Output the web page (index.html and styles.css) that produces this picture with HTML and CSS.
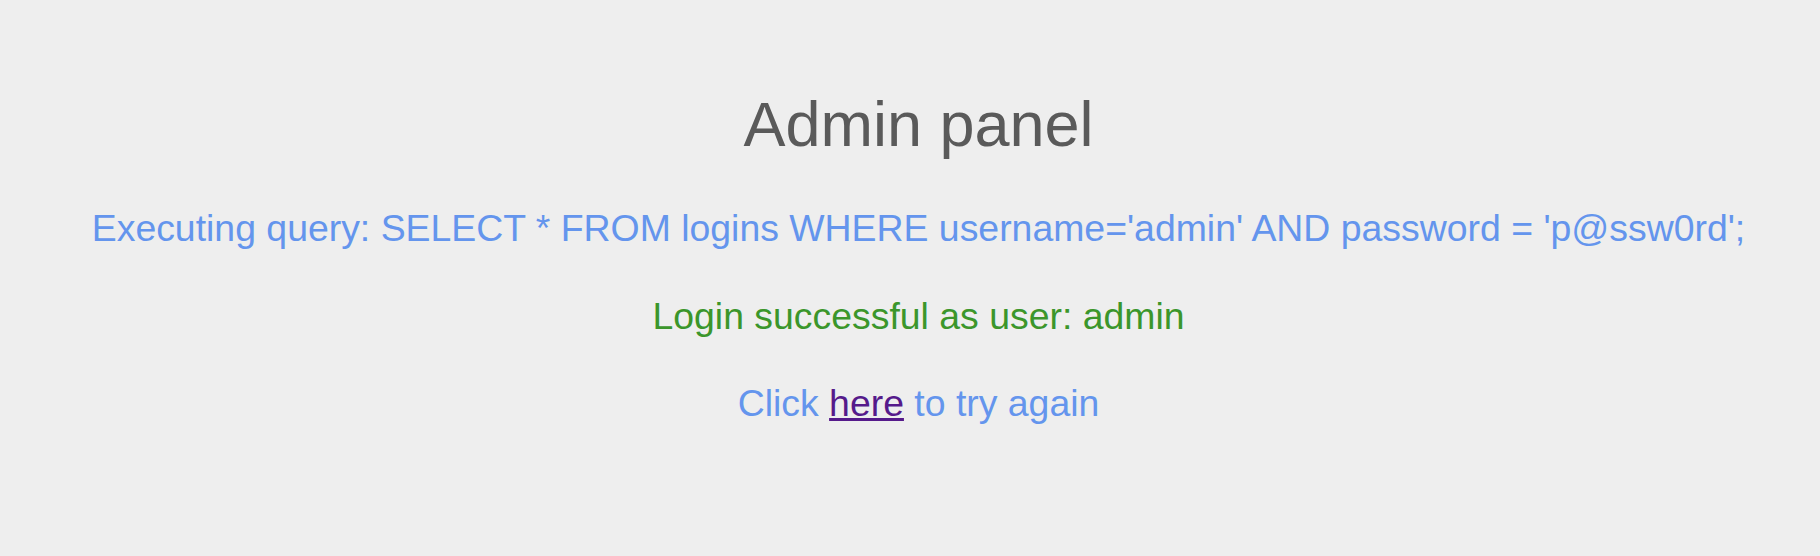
FILE: index.html
```html
<!DOCTYPE html>
<html>
<head>
<meta charset="utf-8">
<title>Admin panel</title>
<link rel="stylesheet" href="styles.css">
</head>
<body>
<main class="panel">
  <h1 class="title">Admin panel</h1>
  <p class="line query">Executing query: SELECT * FROM logins WHERE username='admin' AND password = 'p@ssw0rd';</p>
  <p class="line success">Login successful as user: admin</p>
  <p class="line again">Click <a class="link" href="#">here</a> to try again</p>
</main>
</body>
</html>
```
FILE: styles.css
```css
html, body {
  margin: 0;
  padding: 0;
  background: #eeeeee;
}
body {
  font-family: "Liberation Sans", Arial, sans-serif;
  height: 556px;
  overflow: hidden;
}
.panel {
  display: flex;
  flex-direction: column;
  align-items: center;
  padding-top: 88px;
  padding-left: 17px;
  text-align: center;
}
.title {
  margin: 0 0 48px;
  font-size: 63px;
  line-height: 72px;
  font-weight: normal;
  color: #5a5a5a;
}
.line {
  margin: 0 0 47.5px;
  font-size: 37.4px;
  line-height: 40px;
  white-space: nowrap;
}
.query { color: #6495ed; }
.success { color: #3b962b; }
.again { color: #6495ed; }
.link { color: #551a8b; }
```
